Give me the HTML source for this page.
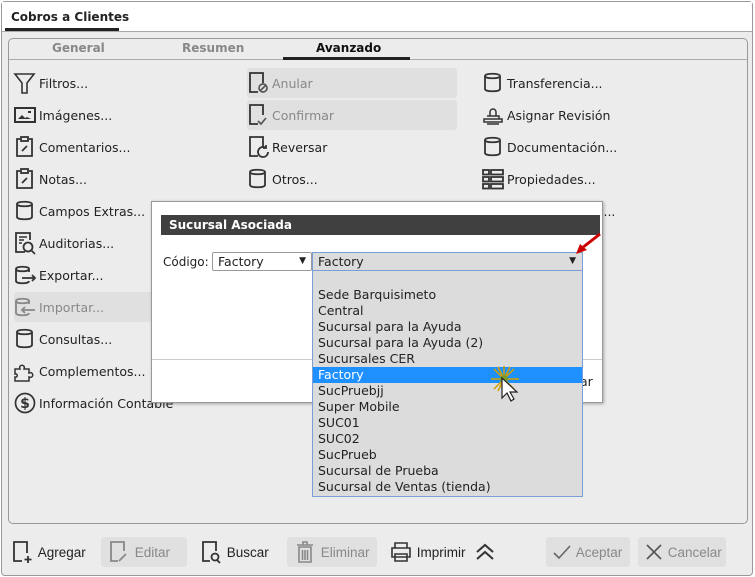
<!DOCTYPE html>
<html><head><meta charset="utf-8"><style>
*{box-sizing:border-box;margin:0;padding:0}
body{width:755px;height:577px;background:#fff;font-family:"DejaVu Sans","Liberation Sans",sans-serif;font-size:12px;color:#222;position:relative;overflow:hidden}
.abs{position:absolute}
.frame{left:1px;top:1px;width:752px;height:575px;border:1px solid #999;border-radius:4px;background:#ececec}
.hdr{left:2px;top:2px;width:750px;height:30px;background:#fff;border-bottom:1px solid #aaa}
.panel{left:8px;top:38px;width:740px;height:486px;border:1px solid #999;border-radius:5px;background:#ececec}
.tab{top:41px;font-weight:bold;font-size:12px;color:#888}
.it{position:absolute;height:30px;display:flex;align-items:center;font-size:12.5px;white-space:nowrap}
.it svg{width:24px;height:24px;margin-right:2px;margin-left:-1px;flex:none}
.dis{color:#888;background:#e0e0e0;border-radius:3px}
.btn{position:absolute;top:537px;height:30px;display:flex;align-items:center;font-family:"Liberation Sans",sans-serif;font-size:13.5px;border-radius:3px;padding-left:6px}
.li{height:16px;line-height:16px;padding-left:5px;font-size:12.5px}
</style></head><body>
<div class="abs frame"></div>
<div class="abs hdr"></div>
<div class="abs" style="left:11px;top:10px;font-weight:bold;font-size:12px">Cobros a Clientes</div>
<div class="abs" style="left:5px;top:28px;width:114px;height:3px;background:#222"></div>
<div class="abs panel"></div>
<div class="abs" style="left:9px;top:59px;width:738px;height:1px;background:#aaa"></div>
<div class="abs tab" style="left:52px">General</div>
<div class="abs tab" style="left:182px">Resumen</div>
<div class="abs tab" style="left:316px;color:#111">Avanzado</div>
<div class="abs" style="left:283px;top:57px;width:127px;height:3px;background:#222"></div>

<svg width="0" height="0" style="position:absolute"><defs>
<g id="cyl" fill="none" stroke="#333" stroke-width="1.8"><path d="M4 5v13c0 3 15 3 15 0V5c0-3-15-3-15 0c0 3 15 3 15 0"/></g>
<g id="clip" fill="none" stroke="#333" stroke-width="1.8"><path d="M7 4H4v17h15V4h-3"/><rect x="8" y="2" width="7" height="4"/><path d="M9 16l5-5"/></g>
<g id="doc" fill="none" stroke="#333" stroke-width="1.8"><path d="M12 21H4V2h13v10"/></g>
</defs></svg>

<div class="it" style="left:14px;top:68px"><svg viewBox="0 0 24 24"><path d="M2 3h19l-7 9v10h-5V12z" fill="none" stroke="#333" stroke-width="1.6"/></svg>Filtros...</div>
<div class="it" style="left:14px;top:100px"><svg viewBox="0 0 24 24"><rect x="2" y="5" width="20" height="14" fill="none" stroke="#333" stroke-width="2"/><path d="M5 16l4-4 3 3 2-1 4 2z" fill="#333"/><rect x="15" y="8" width="3" height="2" fill="#333"/></svg>Imágenes...</div>
<div class="it" style="left:14px;top:132px"><svg viewBox="0 0 24 24"><use href="#clip"/></svg>Comentarios...</div>
<div class="it" style="left:14px;top:164px"><svg viewBox="0 0 24 24"><use href="#clip"/></svg>Notas...</div>
<div class="it" style="left:14px;top:196px"><svg viewBox="0 0 24 24"><use href="#cyl"/></svg>Campos Extras...</div>
<div class="it" style="left:14px;top:228px"><svg viewBox="0 0 24 24"><path d="M12 21H3V2h14v7" fill="none" stroke="#333" stroke-width="1.8"/><circle cx="15" cy="16" r="4.5" fill="none" stroke="#333" stroke-width="1.8"/><path d="M18 19l4 4M6 6h8M6 9h5M6 12h3" stroke="#333" stroke-width="1.6"/></svg>Auditorias...</div>
<div class="it" style="left:14px;top:260px"><svg viewBox="0 0 24 24"><path d="M3 6v12c0 3 13 3 13 0M3 6c0-3 13-3 13 0v3M3 6c0 3 13 3 13 0M9 15h13M19 12l3 3-3 3" fill="none" stroke="#333" stroke-width="1.8"/></svg>Exportar...</div>
<div class="it dis" style="left:14px;top:292px;width:186px"><svg viewBox="0 0 24 24"><path d="M3 6v12c0 3 13 3 13 0M3 6c0-3 13-3 13 0v3M3 6c0 3 13 3 13 0M9 15h13M12 12l-3 3 3 3" fill="none" stroke="#888" stroke-width="1.8"/></svg>Importar...</div>
<div class="it" style="left:14px;top:324px"><svg viewBox="0 0 24 24"><use href="#cyl"/></svg>Consultas...</div>
<div class="it" style="left:14px;top:356px"><svg viewBox="0 0 24 24"><path d="M2 10h5c-2-5 6-5 4 0h5v4c5-2 5 6 0 4v4H2v-4c3 1 3-4 0-3z" fill="none" stroke="#333" stroke-width="1.5"/></svg>Complementos...</div>
<div class="it" style="left:14px;top:388px"><svg viewBox="0 0 24 24"><circle cx="12" cy="12" r="9.5" fill="none" stroke="#333" stroke-width="1.7"/><text x="12" y="17" text-anchor="middle" font-size="14" font-weight="bold" fill="#333">$</text></svg>Información Contable</div>

<div class="it dis" style="left:247px;top:68px;width:210px"><svg viewBox="0 0 24 24"><use href="#doc" style="stroke:#666"/><circle cx="17" cy="17" r="4" fill="none" stroke="#555" stroke-width="1.7"/><path d="M14.5 19.5l5-5" stroke="#555" stroke-width="1.6"/></svg>Anular</div>
<div class="it dis" style="left:247px;top:100px;width:210px"><svg viewBox="0 0 24 24"><use href="#doc" style="stroke:#666"/><path d="M12 18l3 3 5-6" fill="none" stroke="#555" stroke-width="1.7"/></svg>Confirmar</div>
<div class="it" style="left:247px;top:132px"><svg viewBox="0 0 24 24"><use href="#doc"/><path d="M22 17a5 5 0 1 1-2-4M20 10v3h-3" fill="none" stroke="#333" stroke-width="1.8"/></svg>Reversar</div>
<div class="it" style="left:247px;top:164px"><svg viewBox="0 0 24 24"><use href="#cyl"/></svg>Otros...</div>

<div class="it" style="left:482px;top:68px"><svg viewBox="0 0 24 24"><use href="#cyl"/></svg>Transferencia...</div>
<div class="it" style="left:482px;top:100px"><svg viewBox="0 0 24 24"><path d="M9 13V9a3 3 0 1 1 6 0v4M3 16h18v3H3zM6 13h12v3M6 21h12" fill="none" stroke="#333" stroke-width="1.5"/></svg>Asignar Revisión</div>
<div class="it" style="left:482px;top:132px"><svg viewBox="0 0 24 24"><use href="#cyl"/></svg>Documentación...</div>
<div class="it" style="left:482px;top:164px"><svg viewBox="0 0 24 24"><g fill="none" stroke="#333" stroke-width="1.8"><rect x="2" y="3" width="6" height="4.5"/><rect x="10" y="3" width="12" height="4.5"/><rect x="2" y="10" width="6" height="4.5"/><rect x="10" y="10" width="12" height="4.5"/><rect x="2" y="17" width="6" height="4.5"/><rect x="10" y="17" width="12" height="4.5"/></g></svg>Propiedades...</div>
<div class="abs" style="left:600px;top:204px;font-size:12.5px">l...</div>

<!-- dialog -->
<div class="abs" style="left:151px;top:201px;width:452px;height:202px;background:#fff;border:1px solid #999;box-shadow:1px 1px 3px rgba(0,0,0,.3)"></div>
<div class="abs" style="left:161px;top:215px;width:439px;height:20px;background:#404040;color:#fff;font-weight:bold;font-size:12px;line-height:20px;padding-left:8px">Sucursal Asociada</div>
<div class="abs" style="left:152px;top:359px;width:450px;height:1px;background:#ccc"></div>
<div class="abs" style="left:580px;top:374px;font-size:12.5px">ar</div>
<div class="abs" style="left:163px;top:255px;font-size:12px">Código:</div>
<div class="abs" style="left:212px;top:252px;width:100px;height:19px;border:1px solid #999;border-radius:2px;background:#fff;font-size:12.5px;line-height:17px;padding-left:5px">Factory<span style="position:absolute;right:5px;font-size:9px">▼</span></div>
<div class="abs" style="left:312px;top:252px;width:271px;height:19px;border:1px solid #7a9fd6;background:#dcdcdc;font-size:12.5px;line-height:17px;padding-left:5px">Factory<span style="position:absolute;right:6px;font-size:9px">▼</span></div>
<div class="abs" style="left:312px;top:270px;width:271px;height:227px;border:1px solid #7a9fd6;background:#dcdcdc;padding-top:16px">
<div class="li">Sede Barquisimeto</div><div class="li">Central</div><div class="li">Sucursal para la Ayuda</div><div class="li">Sucursal para la Ayuda (2)</div><div class="li">Sucursales CER</div><div class="li" style="background:#1e90ff;color:#fff">Factory</div><div class="li">SucPruebjj</div><div class="li">Super Mobile</div><div class="li">SUC01</div><div class="li">SUC02</div><div class="li">SucPrueb</div><div class="li">Sucursal de Prueba</div><div class="li">Sucursal de Ventas (tienda)</div>
</div>
<svg class="abs" style="left:570px;top:232px" width="32" height="32"><path d="M30 2L12 16" stroke="#c00" stroke-width="3"/><path d="M6 22l4-10 7 6z" fill="#c00"/></svg>
<svg class="abs" style="left:488px;top:364px" width="36" height="42"><g stroke="#d4a000" stroke-width="1.5"><path d="M16 2v26M3 15h28M6 5l20 20M26 5L6 25M10 3l12 24M22 3L10 27"/></g><circle cx="16" cy="15" r="4" fill="#7a9a2a"/><path d="M14 14v20l5-5 4 8 3-2-4-7h7z" fill="#fff" stroke="#222" stroke-width="1.2"/></svg>

<!-- bottom toolbar -->
<div class="btn" style="left:4px"><svg width="24" height="24" viewBox="0 0 24 24"><path d="M12 21H4V2h13v11M18 16v7M14.5 19.5h7" fill="none" stroke="#333" stroke-width="1.8"/></svg>&nbsp;Agregar</div>
<div class="btn" style="left:101px;width:86px;background:#e0e0e0;color:#888"><svg width="24" height="24" viewBox="0 0 24 24"><path d="M11 21H4V2h13v9M12 21l7-7" fill="none" stroke="#888" stroke-width="1.8"/></svg>&nbsp;Editar</div>
<div class="btn" style="left:193px"><svg width="24" height="24" viewBox="0 0 24 24"><path d="M11 21H4V2h13v9" fill="none" stroke="#333" stroke-width="1.8"/><circle cx="16" cy="17" r="3.5" fill="none" stroke="#333" stroke-width="1.8"/><path d="M18 20l3 3" stroke="#333" stroke-width="1.8"/></svg>&nbsp;Buscar</div>
<div class="btn" style="left:287px;width:90px;background:#e0e0e0;color:#888"><svg width="24" height="24" viewBox="0 0 24 24"><path d="M4 5h16M10 5V2h4v3M6 7h12v15H6zM9.5 10v10M12 10v10M14.5 10v10" fill="none" stroke="#888" stroke-width="1.6"/></svg>&nbsp;Eliminar</div>
<div class="btn" style="left:383px"><svg width="24" height="24" viewBox="0 0 24 24"><path d="M6 8V3h12v5M3 8h18v9H3zM6 14h12v7H6z" fill="none" stroke="#333" stroke-width="1.6"/></svg>&nbsp;Imprimir</div>
<svg class="abs" style="left:474px;top:542px" width="22" height="20"><path d="M3 10l8-7 8 7M3 17l8-7 8 7" fill="none" stroke="#333" stroke-width="2"/></svg>
<div class="btn" style="left:546px;width:84px;background:#e0e0e0;color:#888"><svg width="20" height="20" viewBox="0 0 20 20"><path d="M2 11l5 5L18 4" fill="none" stroke="#666" stroke-width="1.6"/></svg>&nbsp;Aceptar</div>
<div class="btn" style="left:638px;width:88px;background:#e0e0e0;color:#888"><svg width="20" height="20" viewBox="0 0 20 20"><path d="M3 3l14 14M17 3L3 17" stroke="#555" stroke-width="1.6"/></svg>&nbsp;Cancelar</div>
</body></html>
